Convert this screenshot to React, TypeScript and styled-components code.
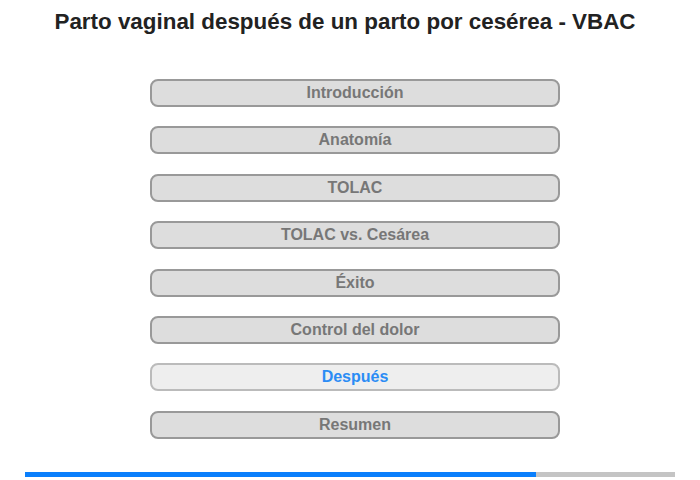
import styled, { createGlobalStyle } from "styled-components";

const GlobalStyle = createGlobalStyle`
  body {
    margin: 0;
    background: #fff;
    font-family: "Liberation Sans", Arial, sans-serif;
  }
`;

const Page = styled.div`
  width: 700px;
  height: 480px;
  display: flex;
  flex-direction: column;
  overflow: hidden;
`;

const Title = styled.h1`
  margin: 9px 0 0 0;
  height: 26px;
  line-height: 26px;
  text-align: center;
  font-size: 22.4px;
  font-weight: bold;
  color: #222;
  padding-right: 10px;
`;

const Menu = styled.nav`
  display: flex;
  flex-direction: column;
  gap: 19.4px;
  width: 410px;
  margin: 44px 0 0 150px;
`;

const MenuButton = styled.div<{ $active?: boolean }>`
  box-sizing: border-box;
  height: 28px;
  border: 2px solid ${(p) => (p.$active ? "#bbb" : "#999")};
  border-radius: 8px;
  background: ${(p) => (p.$active ? "#eee" : "#ddd")};
  color: ${(p) => (p.$active ? "#2b8cf5" : "#777")};
  font-size: 16px;
  font-weight: bold;
  display: flex;
  align-items: center;
  justify-content: center;
`;

const Progress = styled.div`
  margin: 33px 0 0 25px;
  width: 650px;
  height: 5px;
  background: #c4c4c4;
  display: flex;
`;

const ProgressFill = styled.div`
  height: 100%;
  background: #0a7ffc;
`;

const items = [
  "Introducción",
  "Anatomía",
  "TOLAC",
  "TOLAC vs. Cesárea",
  "Éxito",
  "Control del dolor",
  "Después",
  "Resumen",
];

export default function App() {
  const active = 6;
  return (
    <Page>
      <GlobalStyle />
      <Title>Parto vaginal después de un parto por cesérea - VBAC</Title>
      <Menu>
        {items.map((t, i) => (
          <MenuButton key={t} $active={i === active}>
            {t}
          </MenuButton>
        ))}
      </Menu>
      <Progress>
        <ProgressFill style={{ width: `${(511 / 650) * 100}%` }} />
      </Progress>
    </Page>
  );
}
